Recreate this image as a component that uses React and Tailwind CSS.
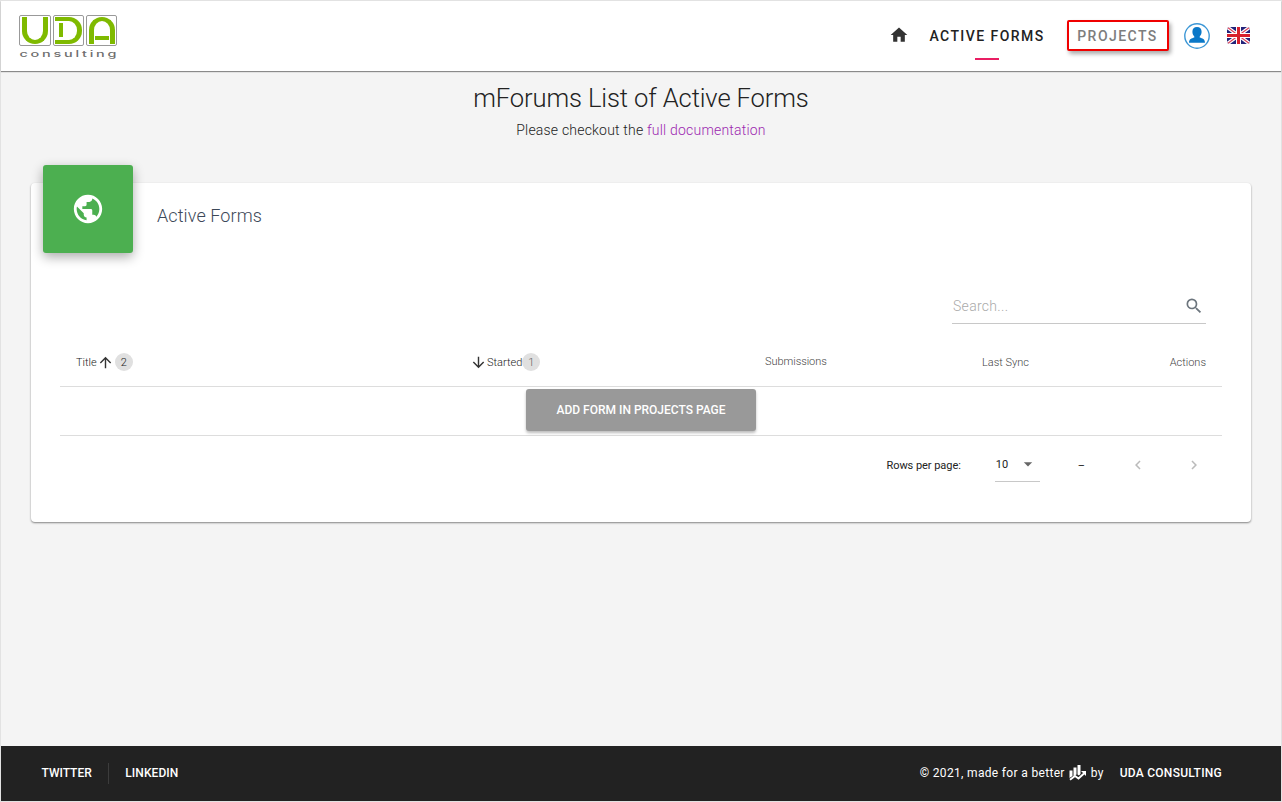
import React from "react";
import { MdHome, MdPublic, MdSearch, MdArrowUpward, MdArrowDownward, MdArrowDropDown, MdChevronLeft, MdChevronRight } from "react-icons/md";

function Logo() {
  return (
    <div className="ml-[18px] mt-[14px] w-[99px]">
      <div className="flex gap-[2px]">
        <div className="h-[31px] w-8 rounded-[2px] border border-[#999] px-[2px] pt-px">
          <div className="h-[27px] w-[26px] rounded-b-[13px] border-x-[5px] border-b-[4px] border-[#7fba00]" />
        </div>
        <div className="h-[31px] w-[31px] rounded-[2px] border border-[#999] pl-px pt-px">
          <div className="h-[27px] w-[27px] rounded-r-[13px] border-y-[4px] border-r-[5px] border-[#7fba00] pl-1 pt-[2px]">
            <div className="h-[14px] w-[4px] bg-[#7fba00]" />
          </div>
        </div>
        <div className="h-[31px] w-[31px] rounded-[2px] border border-[#999] pl-[2px] pt-px">
          <div className="h-[27px] w-[26px] rounded-t-[13px] border-x-[5px] border-t-[4px] border-[#7fba00] px-px pt-[15px]">
            <div className="h-[4px] w-[14px] bg-[#7fba00]" />
          </div>
        </div>
      </div>
      <svg width="99" height="15" className="block">
        <text transform="scale(1.7 1)" x="0.300" y="11" textLength="57" fontFamily="Inter, sans-serif" fontSize="8.5" fontWeight="500" fill="#6f6f6f">consulting</text>
      </svg>
    </div>
  );
}

function UserIcon() {
  return (
    <svg width="26" height="26" viewBox="0 0 26 26">
      <circle cx="13" cy="13" r="12.200" fill="#fff" stroke="#3c97d6" strokeWidth="1.400" />
      <path d="M13 4c-3 0-4.600 2-4.600 4.700 0 2 .8 3.700 1.900 4.700v1.200C7.700 15.500 5 16 5 19.800h16c0-3.800-2.700-4.300-5.300-5.200v-1.200c1.100-1 1.900-2.700 1.900-4.700C17.600 6 16 4 13 4z" fill="#0a78c8" />
    </svg>
  );
}

function Flag() {
  return (
    <svg width="24" height="18" viewBox="0 0 24 18">
      <clipPath id="flagClip"><rect width="23" height="17" rx="3" /></clipPath>
      <g clipPath="url(#flagClip)">
        <rect width="24" height="18" fill="#23237a" />
        <path d="M0 0L23 17M23 0L0 17" stroke="#fff" strokeWidth="3.600" />
        <path d="M0 0L23 17M23 0L0 17" stroke="#dc4058" strokeWidth="1.200" />
        <path d="M11.500 0V18M0 8.500H24" stroke="#fff" strokeWidth="5" />
        <path d="M11.500 0V18M0 8.500H24" stroke="#d8202c" strokeWidth="3" />
      </g>
    </svg>
  );
}

function ChartIcon() {
  return (
    <svg width="17" height="16" viewBox="0 0 17 16" fill="#fff">
      <path d="M0.500 5.500h3v5.500l-3 2zM4.500 2.500h3v7L4.500 11zM8.500 0h3v9l-1.500 1.500-1.500-1z" />
      <path d="M1 14.800l5-3.800 3.500 2.500L15 8.500" stroke="#fff" strokeWidth="1.900" fill="none" />
      <path d="M12 6h5v5z" />
    </svg>
  );
}

export default function App() {
  return (
    <div className="flex h-[802px] w-[1282px] flex-col border border-[#e2e2e2] bg-[#f4f4f4] font-[Roboto,sans-serif] text-[#222]">
      <header className="flex h-[70px] shrink-0 justify-between bg-white shadow-[0_1px_1px_#8a8a8a]">
        <Logo />
        <nav className="flex items-start pr-[30px] text-sm font-medium">
          <MdHome size={20} className="mt-6 text-[#333]" />
          <div className="ml-5 flex w-[116px] flex-col items-center pt-[25px] leading-5">
            <span className="whitespace-nowrap tracking-[1.44px]">ACTIVE FORMS</span>
            <span className="mt-3 h-[2px] w-6 bg-[#e91e63]" />
          </div>
          <div className="ml-[22px] mt-[19px] flex h-[31px] w-[102px] items-center justify-center rounded-[2px] border-2 border-[#f00000] bg-white pr-px tracking-[1.45px] text-[#7d7d7d] shadow-[2px_3px_4px_#0005]">PROJECTS</div>
          <div className="ml-[15px] mt-[22px]"><UserIcon /></div>
          <div className="ml-[17px] mt-[26px]"><Flag /></div>
        </nav>
      </header>

      <main className="flex-1 px-[30px]">
        <div className="pt-[9px] text-center font-light">
          <h1 className="text-[25.6px] leading-[36px] tracking-[-0.13px]">mForums List of Active Forms</h1>
          <p className="mt-[3px] text-sm leading-[22px] tracking-[0.2px]">Please checkout the <a className="text-[#9c27b0]">full documentation</a></p>
        </div>

        <section className="mt-[42px] h-[339px] rounded-[4px] bg-white px-[29px] shadow-[0_1px_2px_#0007]">
          <div className="-ml-[17px] flex h-[88px]">
            <div className="-mt-[18px] flex h-[88px] w-[90px] shrink-0 items-center justify-center rounded-[3px] bg-[#4caf50] text-white shadow-[0_4px_12px_#0005]">
              <MdPublic size={34} />
            </div>
            <h2 className="ml-6 mt-5 text-lg font-light leading-[26px] tracking-[0.1px] text-[#3c4858]">Active Forms</h2>
          </div>
          <div className="flex justify-end pr-4">
            <div className="mt-[18px] flex h-[35px] w-[254px] items-center justify-between border-b border-[#c8c8c8] pr-[2px] text-sm font-light text-[#aaa]">
              <span className="pl-px tracking-[0.3px]">Search...</span>
              <MdSearch size={20} className="text-[#6c757d]" />
            </div>
          </div>
          <div className="flex h-[63px] items-center border-b border-[#ddd] pt-[15px] text-[11px] font-light">
            <div className="flex w-[410px] items-center pl-4">
              <span className="pt-px">Title</span>
              <MdArrowUpward size={17} className="text-[#333]" />
              <span className="-mt-px ml-px flex h-[18px] w-[18px] items-center justify-center rounded-full bg-[#e0e0e0] pt-[2px]">2</span>
            </div>
            <div className="flex w-[295px] items-center">
              <MdArrowDownward size={17} className="text-[#333]" />
              <span className="pt-px">Started</span>
              <span className="-mt-px flex h-[18px] w-[18px] items-center justify-center rounded-full bg-[#e0e0e0] pt-[2px] text-[#666]">1</span>
            </div>
            <span className="w-[217px] tracking-[-0.05px] text-[#444]">Submissions</span>
            <span className="pt-[2px] text-[#444]">Last Sync</span>
            <span className="ml-auto pr-4 pt-[2px] text-[#444]">Actions</span>
          </div>
          <div className="flex h-[49px] justify-center border-b border-[#ddd] pt-[2px]">
            <button className="h-[42px] w-[230px] rounded-[3px] bg-[#999] text-xs font-medium text-white shadow-[0_2px_3px_#0004]">ADD FORM IN PROJECTS PAGE</button>
          </div>
          <div className="flex h-[58px] items-center justify-end pr-[19px] text-[11px]">
            <span className="pt-[2px] tracking-[-0.05px]">Rows per page:</span>
            <div className="ml-[34px] mt-[-1px] flex h-[35px] w-[45px] items-center border-b border-[#c8c8c8]">
              <span className="pl-px pt-[2px]">10</span>
              <MdArrowDropDown size={20} className="ml-[10px] text-[#666]" />
            </div>
            <span className="ml-[38px] pt-[2px]">–</span>
            <MdChevronLeft size={18} className="ml-[44px] text-[#bbb]" />
            <MdChevronRight size={18} className="ml-[38px] text-[#bbb]" />
          </div>
        </section>
      </main>

      <footer className="flex h-[55px] shrink-0 items-center justify-between bg-[#222] pb-[2px] pl-[40.5px] pr-[59px] text-xs font-medium text-white">
        <div className="flex items-center">
          <span>TWITTER</span>
          <span className="ml-4 mt-[2px] h-[21px] w-px bg-[#3c3c3c]" />
          <span className="ml-[16.5px] tracking-[0.08px]">LINKEDIN</span>
        </div>
        <div className="flex items-center">
          <span className="font-normal tracking-[0.33px]">© 2021, made for a better</span>
          <span className="ml-1 mr-[5px]"><ChartIcon /></span>
          <span className="font-normal tracking-[0.3px]">by</span>
          <span className="ml-4 tracking-[0.26px]">UDA CONSULTING</span>
        </div>
      </footer>
    </div>
  );
}
